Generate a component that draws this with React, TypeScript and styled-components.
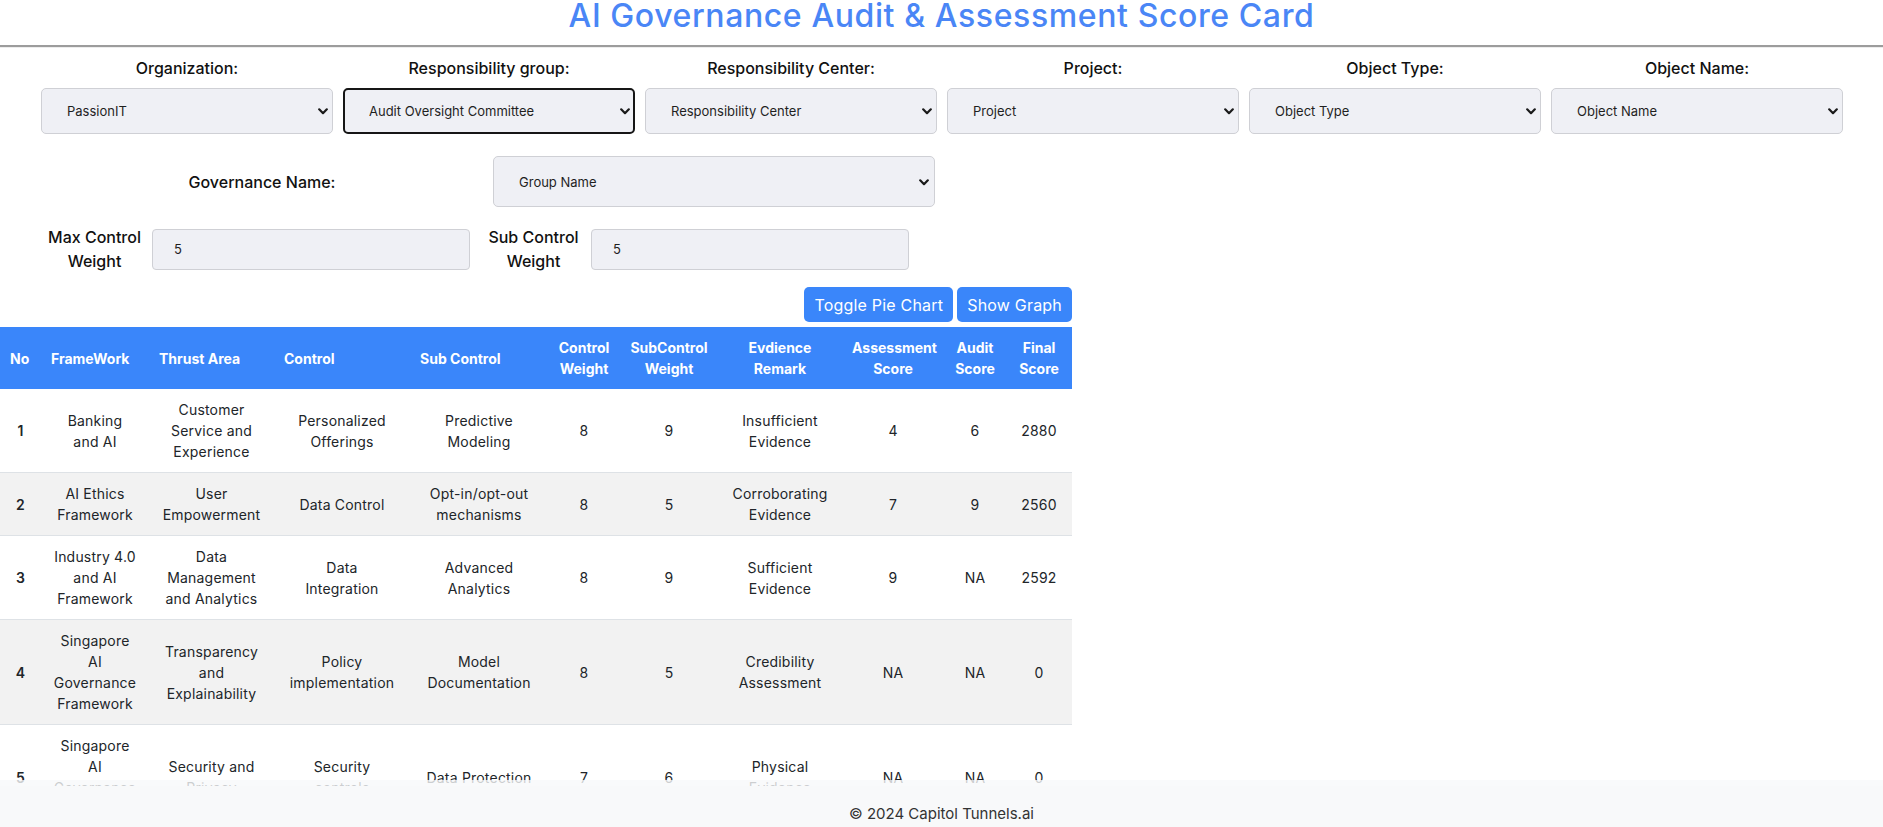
import React from "react";
import styled, { createGlobalStyle } from "styled-components";

const GlobalStyle = createGlobalStyle`
  html, body { margin: 0; padding: 0; overflow: hidden; background: #ffffff; }
  body { font-family: Inter, "Open Sans", sans-serif; color: #212529; }
  * { box-sizing: border-box; }
`;

const Page = styled.div`
  height: 100vh;
  overflow: hidden;
`;

const Title = styled.h1`
  margin: 0;
  padding-top: 1px;
  text-align: center;
  font-size: 32px;
  font-weight: 500;
  line-height: 30px;
  letter-spacing: 0.6px;
  color: #4a86f6;
`;

const Divider = styled.hr`
  margin: 14px 0 0;
  height: 0;
  border: 0;
  border-top: 2px solid #9c9c9c;
  border-bottom: 1px solid #ededed;
`;

const FilterGrid = styled.div`
  display: grid;
  grid-template-columns: repeat(6, 1fr);
  column-gap: 10px;
  padding: 8px 40px 0 41px;
`;

const FilterCell = styled.div`
  display: flex;
  flex-direction: column;
  align-items: center;
  gap: 8px;
`;

const FieldLabel = styled.label`
  font-size: 16px;
  font-weight: 500;
  line-height: 24px;
  color: #111;
  text-align: center;
`;

const SelectWrap = styled.div`
  position: relative;
  width: 100%;
`;

const Select = styled.select<{ $focused?: boolean; $h?: number }>`
  appearance: none;
  -webkit-appearance: none;
  width: 100%;
  height: ${(p) => p.$h ?? 46}px;
  background: #eff0f5;
  border: ${(p) => (p.$focused ? "2px solid #161616" : "1px solid #cfd0d5")};
  border-radius: 5px;
  padding: 0 30px 0 ${(p) => (p.$focused ? 24 : 25)}px;
  font-family: inherit;
  font-size: 13px;
  color: #1f1f1f;
  outline: none;
`;

const Chevron = styled.svg<{ $right?: number }>`
  position: absolute;
  right: ${(p) => p.$right ?? 5}px;
  top: 50%;
  width: 10px;
  height: 7px;
  margin-top: -3px;
  pointer-events: none;
`;

const GovRow = styled.div`
  display: grid;
  grid-template-columns: 442px 442px;
  column-gap: 10px;
  align-items: center;
  padding: 22px 0 0 41px;
`;

const WeightRow = styled.div`
  display: flex;
  gap: 10px;
  padding: 18px 0 0 41px;
`;

const WeightGroup = styled.div`
  display: grid;
  grid-template-columns: 107px 318px;
  column-gap: 4px;
  align-items: center;
`;

const WeightInput = styled.input`
  height: 41px;
  width: 100%;
  background: #eff0f5;
  border: 1px solid #cfd0d5;
  border-radius: 4px;
  padding: 0 0 0 21px;
  font-family: inherit;
  font-size: 13px;
  color: #1f1f1f;
  outline: none;
`;

const TableSection = styled.div`
  width: 1072px;
  padding-top: 14px;
`;

const ButtonBar = styled.div`
  display: flex;
  justify-content: flex-end;
  gap: 4px;
  margin-bottom: 5px;
`;

const ActionButton = styled.button`
  height: 35px;
  padding: 0 10px;
  border: none;
  border-radius: 5px;
  background: #3a86fa;
  color: #fff;
  font-family: inherit;
  font-size: 16px;
  font-weight: 400;
  letter-spacing: 0.2px;
  cursor: pointer;
`;

const Table = styled.table`
  width: 1072px;
  border-collapse: collapse;
  table-layout: fixed;
  font-size: 14px;
`;

const Th = styled.th<{ $align: "left" | "center" }>`
  background: #3a86fa;
  color: #fff;
  font-weight: 700;
  line-height: 21px;
  padding: 10px;
  text-align: ${(p) => p.$align};
  vertical-align: middle;
  white-space: nowrap;
`;

const Row = styled.tr<{ $striped: boolean }>`
  background: ${(p) => (p.$striped ? "#f2f2f2" : "#ffffff")};
  border-bottom: 1px solid #dee2e6;
`;

const Td = styled.td<{ $strong?: boolean }>`
  padding: 10px;
  line-height: 21px;
  text-align: center;
  vertical-align: middle;
  white-space: nowrap;
  letter-spacing: 0.2px;
  font-weight: ${(p) => (p.$strong ? 600 : 400)};
  color: #212529;
`;

const Footer = styled.footer`
  position: fixed;
  left: 0;
  right: 0;
  bottom: 0;
  height: 47px;
  background: #f8f9fa;
  background-clip: padding-box;
  border-top: 6px solid rgba(248, 249, 250, 0.8);
  padding-top: 16px;
  text-align: center;
  font-size: 15px;
  line-height: 24px;
  color: #333;
`;

const ChevronIcon = ({ right }: { right?: number }) => (
  <Chevron $right={right} viewBox="0 0 10 7">
    <path d="M1.2 1.3 L5 5.2 L8.8 1.3" fill="none" stroke="#1a1a1a" strokeWidth="2.2" strokeLinecap="round" strokeLinejoin="round" />
  </Chevron>
);

const filters = [
  { label: "Organization:", value: "PassionIT" },
  { label: "Responsibility group:", value: "Audit Oversight Committee", focused: true },
  { label: "Responsibility Center:", value: "Responsibility Center" },
  { label: "Project:", value: "Project" },
  { label: "Object Type:", value: "Object Type" },
  { label: "Object Name:", value: "Object Name" },
];

const columns: { lines: string[]; width: number; align: "left" | "center" }[] = [
  { lines: ["No"], width: 41, align: "left" },
  { lines: ["FrameWork"], width: 108, align: "left" },
  { lines: ["Thrust Area"], width: 125, align: "left" },
  { lines: ["Control"], width: 136, align: "left" },
  { lines: ["Sub Control"], width: 138, align: "left" },
  { lines: ["Control", "Weight"], width: 72, align: "center" },
  { lines: ["SubControl", "Weight"], width: 98, align: "center" },
  { lines: ["Evdience", "Remark"], width: 124, align: "center" },
  { lines: ["Assessment", "Score"], width: 102, align: "center" },
  { lines: ["Audit", "Score"], width: 62, align: "center" },
  { lines: ["Final", "Score"], width: 66, align: "center" },
];

type Cell = string | string[];

const rows: Cell[][] = [
  ["1", ["Banking", "and AI"], ["Customer", "Service and", "Experience"], ["Personalized", "Offerings"], ["Predictive", "Modeling"], "8", "9", ["Insufficient", "Evidence"], "4", "6", "2880"],
  ["2", ["AI Ethics", "Framework"], ["User", "Empowerment"], ["Data Control"], ["Opt-in/opt-out", "mechanisms"], "8", "5", ["Corroborating", "Evidence"], "7", "9", "2560"],
  ["3", ["Industry 4.0", "and AI", "Framework"], ["Data", "Management", "and Analytics"], ["Data", "Integration"], ["Advanced", "Analytics"], "8", "9", ["Sufficient", "Evidence"], "9", "NA", "2592"],
  ["4", ["Singapore", "AI", "Governance", "Framework"], ["Transparency", "and", "Explainability"], ["Policy", "implementation"], ["Model", "Documentation"], "8", "5", ["Credibility", "Assessment"], "NA", "NA", "0"],
  ["5", ["Singapore", "AI", "Governance", "Framework"], ["Security and", "Privacy"], ["Security", "controls"], ["Data Protection"], "7", "6", ["Physical", "Evidence"], "NA", "NA", "0"],
];

const Lines = ({ value }: { value: Cell }) => {
  const list = Array.isArray(value) ? value : [value];
  return (
    <>
      {list.map((l, i) => (
        <React.Fragment key={i}>
          {i > 0 && <br />}
          {l}
        </React.Fragment>
      ))}
    </>
  );
};

export default function App() {
  return (
    <Page>
      <GlobalStyle />
      <Title>AI Governance Audit &amp; Assessment Score Card</Title>
      <Divider />

      <FilterGrid>
        {filters.map((f) => (
          <FilterCell key={f.label}>
            <FieldLabel>{f.label}</FieldLabel>
            <SelectWrap>
              <Select $focused={f.focused} defaultValue={f.value}>
                <option value={f.value}>{f.value}</option>
              </Select>
              <ChevronIcon />
            </SelectWrap>
          </FilterCell>
        ))}
      </FilterGrid>

      <GovRow>
        <FieldLabel>Governance Name:</FieldLabel>
        <SelectWrap>
          <Select $h={51} defaultValue="Group Name">
            <option value="Group Name">Group Name</option>
          </Select>
          <ChevronIcon right={6} />
        </SelectWrap>
      </GovRow>

      <WeightRow>
        <WeightGroup>
          <FieldLabel>
            Max Control
            <br />
            Weight
          </FieldLabel>
          <WeightInput defaultValue="5" />
        </WeightGroup>
        <WeightGroup>
          <FieldLabel>
            Sub Control
            <br />
            Weight
          </FieldLabel>
          <WeightInput defaultValue="5" />
        </WeightGroup>
      </WeightRow>

      <TableSection>
        <ButtonBar>
          <ActionButton>Toggle Pie Chart</ActionButton>
          <ActionButton>Show Graph</ActionButton>
        </ButtonBar>
        <Table>
          <colgroup>
            {columns.map((c, i) => (
              <col key={i} style={{ width: c.width }} />
            ))}
          </colgroup>
          <thead>
            <tr>
              {columns.map((c, i) => (
                <Th key={i} $align={c.align}>
                  <Lines value={c.lines} />
                </Th>
              ))}
            </tr>
          </thead>
          <tbody>
            {rows.map((r, ri) => (
              <Row key={ri} $striped={ri % 2 === 1}>
                {r.map((cell, ci) => (
                  <Td key={ci} $strong={ci === 0}>
                    <Lines value={cell} />
                  </Td>
                ))}
              </Row>
            ))}
          </tbody>
        </Table>
      </TableSection>

      <Footer>© 2024 Capitol Tunnels.ai</Footer>
    </Page>
  );
}
